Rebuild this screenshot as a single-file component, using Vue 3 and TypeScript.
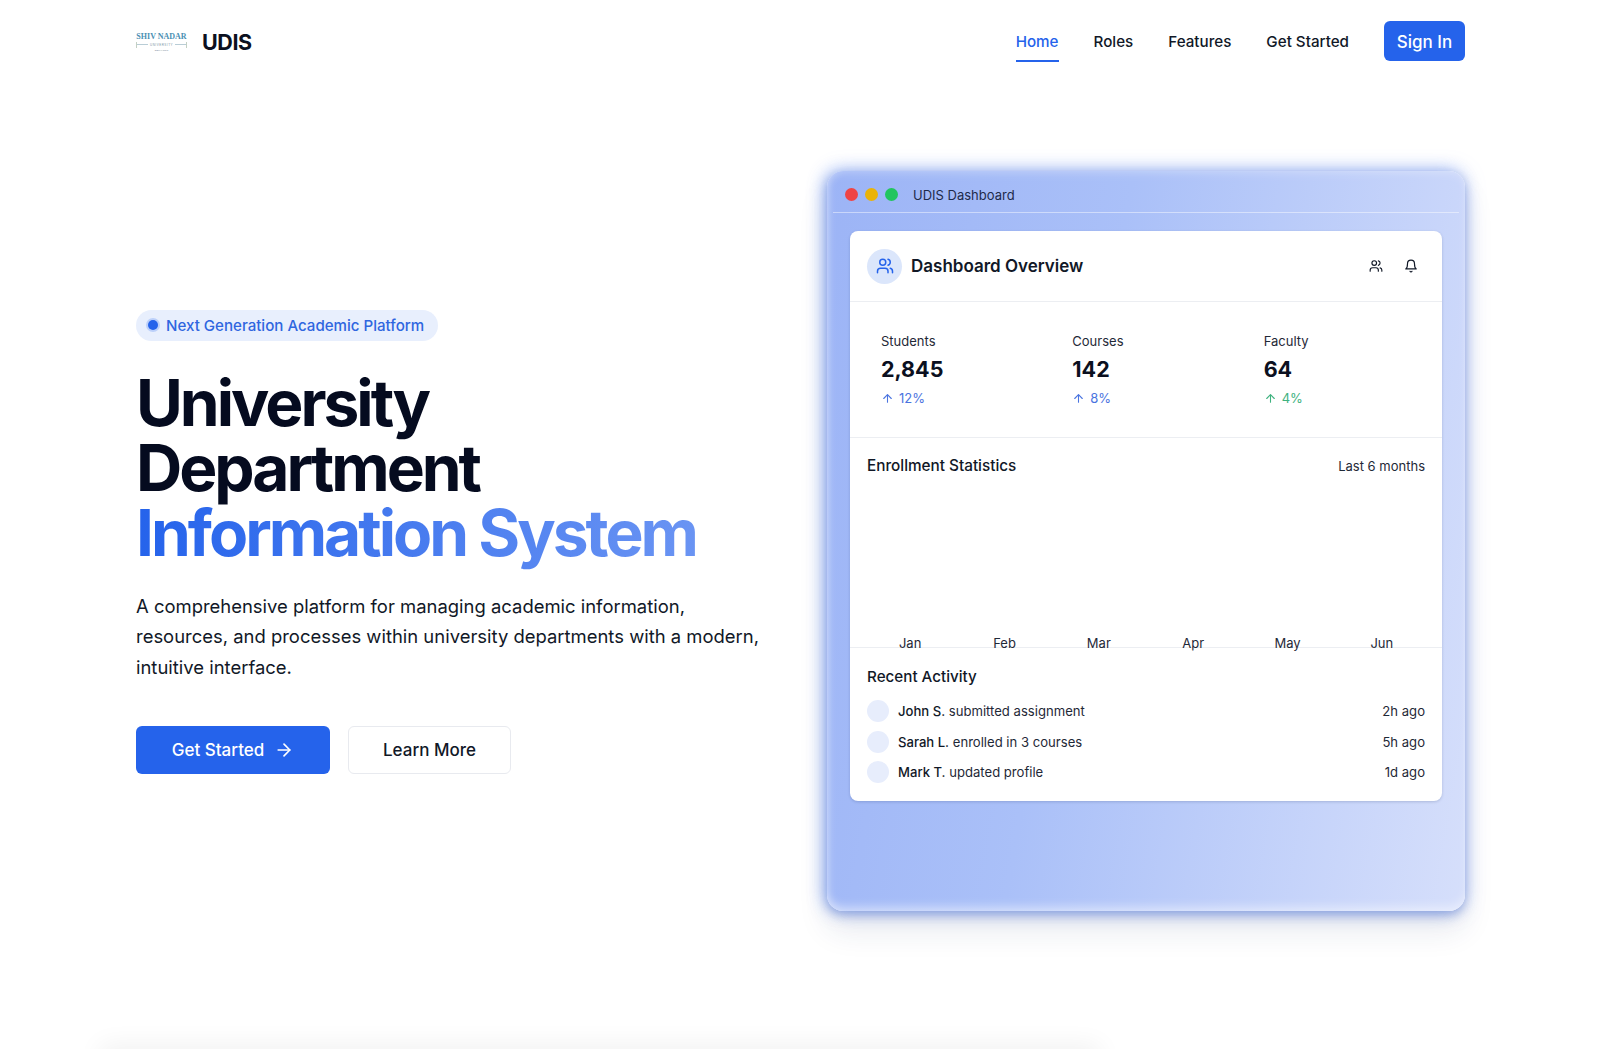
<script setup lang="ts">
const links = ['Home', 'Roles', 'Features', 'Get Started']
const stats = [
  { label: 'Students', value: '2,845', change: '12%', tone: 'blue' },
  { label: 'Courses', value: '142', change: '8%', tone: 'blue' },
  { label: 'Faculty', value: '64', change: '4%', tone: 'green' },
]
const months = ['Jan', 'Feb', 'Mar', 'Apr', 'May', 'Jun']
const activity = [
  { who: 'John S.', what: 'submitted assignment', when: '2h ago' },
  { who: 'Sarah L.', what: 'enrolled in 3 courses', when: '5h ago' },
  { who: 'Mark T.', what: 'updated profile', when: '1d ago' },
]
</script>

<template>
  <div class="page">
    <header class="nav">
      <div class="brand">
        <div class="logo">
          <span class="logo-name">SHIV NADAR</span>
          <span class="logo-uni">UNIVERSITY</span>
          <span class="logo-sub">DELHI NCR</span>
        </div>
        <span class="brand-text">UDIS</span>
      </div>
      <nav class="links">
        <a v-for="(l, i) in links" :key="l" class="link" :class="{ active: i === 0 }">{{ l }}</a>
        <button class="signin">Sign In</button>
      </nav>
    </header>

    <main class="hero">
      <section class="copy">
        <div class="badge"><span class="dot"></span>Next Generation Academic Platform</div>
        <h1>University<br />Department<br /><span class="grad">Information System</span></h1>
        <p>A comprehensive platform for managing academic information, resources, and processes within university departments with a modern, intuitive interface.</p>
        <div class="cta">
          <button class="primary">
            Get Started
            <svg width="20" height="20" viewBox="0 0 24 24" fill="none" stroke="currentColor" stroke-width="2" stroke-linecap="round" stroke-linejoin="round"><path d="M5 12h14" /><path d="m12 5 7 7-7 7" /></svg>
          </button>
          <button class="secondary">Learn More</button>
        </div>
      </section>

      <section class="window">
        <div class="titlebar">
          <span class="light red"></span><span class="light amber"></span><span class="light green"></span>
          <span class="wintitle">UDIS Dashboard</span>
        </div>
        <div class="panel">
          <div class="panel-head">
            <div class="avatar">
              <svg width="18" height="18" viewBox="0 0 24 24" fill="none" stroke="#2563eb" stroke-width="2" stroke-linecap="round" stroke-linejoin="round"><path d="M16 21v-2a4 4 0 0 0-4-4H6a4 4 0 0 0-4 4v2" /><circle cx="9" cy="7" r="4" /><path d="M22 21v-2a4 4 0 0 0-3-3.87" /><path d="M16 3.13a4 4 0 0 1 0 7.75" /></svg>
            </div>
            <span class="panel-title">Dashboard Overview</span>
            <div class="panel-icons">
              <svg width="14" height="14" viewBox="0 0 24 24" fill="none" stroke="#111827" stroke-width="2" stroke-linecap="round" stroke-linejoin="round"><path d="M16 21v-2a4 4 0 0 0-4-4H6a4 4 0 0 0-4 4v2" /><circle cx="9" cy="7" r="4" /><path d="M22 21v-2a4 4 0 0 0-3-3.87" /><path d="M16 3.13a4 4 0 0 1 0 7.75" /></svg>
              <svg width="14" height="14" viewBox="0 0 24 24" fill="none" stroke="#111827" stroke-width="2" stroke-linecap="round" stroke-linejoin="round"><path d="M6 8a6 6 0 0 1 12 0c0 7 3 9 3 9H3s3-2 3-9" /><path d="M10.3 21a1.94 1.94 0 0 0 3.4 0" /></svg>
            </div>
          </div>

          <div class="stats">
            <div v-for="s in stats" :key="s.label" class="stat">
              <div class="stat-label">{{ s.label }}</div>
              <div class="stat-value">{{ s.value }}</div>
              <div class="stat-change" :class="s.tone">
                <svg width="13" height="13" viewBox="0 0 24 24" fill="none" stroke="currentColor" stroke-width="2" stroke-linecap="round" stroke-linejoin="round"><path d="m5 12 7-7 7 7" /><path d="M12 19V5" /></svg>
                {{ s.change }}
              </div>
            </div>
          </div>

          <div class="chart">
            <div class="chart-head">
              <span class="section-title">Enrollment Statistics</span>
              <span class="muted">Last 6 months</span>
            </div>
            <div class="months">
              <span v-for="m in months" :key="m">{{ m }}</span>
            </div>
          </div>

          <div class="recent">
            <div class="section-title small">Recent Activity</div>
            <div v-for="a in activity" :key="a.who" class="row">
              <span class="row-dot"></span>
              <span class="row-text"><b>{{ a.who }}</b> {{ a.what }}</span>
              <span class="row-time">{{ a.when }}</span>
            </div>
          </div>
        </div>
      </section>
    </main>
    <div class="fade"></div>
  </div>
</template>

<style>
html, body { margin: 0; background: #fff; }
</style>

<style scoped>
.page {
  position: relative;
  height: 1049px;
  overflow: hidden;
  background: #fff;
  color: #0f172a;
  font-family: Inter, "Liberation Sans", sans-serif;
}
.nav {
  height: 82px;
  padding: 0 135px 0 136px;
  display: flex;
  align-items: center;
  justify-content: space-between;
}
.brand { display: flex; align-items: center; gap: 15px; }
.logo {
  width: 51px;
  padding-top: 2px;
  display: flex;
  flex-direction: column;
  align-items: center;
  color: #4a8fb3;
}
.logo-name { font: 700 8px/10px "Liberation Serif", serif; white-space: nowrap; }
.logo-uni {
  width: 100%;
  display: flex;
  align-items: center;
  gap: 2px;
  font: 3px/6px "Liberation Sans", sans-serif;
  letter-spacing: 0.5px;
  border-left: 1px solid #c3d0c4;
  border-right: 1px solid #c3d0c4;
  color: #7b95a5;
  box-sizing: border-box;
}
.logo-uni::before, .logo-uni::after {
  content: "";
  flex: 1;
  height: 1px;
  background: #b9cdd6;
}
.logo-sub { font: 2.5px/5px "Liberation Sans", sans-serif; color: #7b8a99; }
.brand-text { font-size: 21.5px; line-height: 28px; padding-top: 1px; font-weight: 700; letter-spacing: -0.4px; color: #0b1020; }
.links { display: flex; align-items: center; gap: 35px; }
.link {
  position: relative;
  font-size: 15.2px;
  font-weight: 500;
  line-height: 41px;
  color: #111827;
}
.link.active { color: #2563eb; }
.link.active::after {
  content: "";
  position: absolute;
  left: 0;
  right: 0;
  bottom: 0;
  height: 2px;
  background: #2563eb;
}
.signin {
  width: 81px;
  height: 40px;
  padding: 1px 0 0;
  border: 0;
  border-radius: 6px;
  background: #2563eb;
  color: #fff;
  font: 500 17px Inter, sans-serif;
}
.hero {
  height: 918px;
  padding: 0 136px;
  box-sizing: border-box;
  display: grid;
  grid-template-columns: 640px 640px;
  gap: 48px;
  align-items: center;
}
.copy { padding-top: 2px; }
.badge {
  display: inline-flex;
  align-items: center;
  gap: 8px;
  height: 31px;
  padding: 0 14px 0 12px;
  border-radius: 16px;
  background: #e8effd;
  color: #2f66e0;
  font-size: 15.1px;
  font-weight: 500;
}
.dot {
  width: 10px;
  height: 10px;
  border-radius: 50%;
  background: #2563eb;
  box-shadow: 0 0 0 2px #bcd0fa;
}
h1 {
  margin: 29px 0 0;
  font-size: 64px;
  line-height: 65.3px;
  font-weight: 700;
  letter-spacing: -3px;
  color: #050b1f;
}
.grad {
  background: linear-gradient(90deg, #2563eb, #6a94f3);
  -webkit-background-clip: text;
  background-clip: text;
  color: transparent;
}
p {
  margin: 25px 0 0;
  font-size: 18.45px;
  line-height: 30.6px;
  color: #111827;
}
.cta { display: flex; gap: 18px; margin-top: 44px; }
.primary, .secondary {
  height: 48px;
  border-radius: 6px;
  font: 500 17px Inter, sans-serif;
  display: inline-flex;
  align-items: center;
  justify-content: center;
}
.primary {
  width: 194px;
  gap: 10px;
  border: 0;
  background: #2563eb;
  color: #fff;
}
.secondary {
  width: 163px;
  border: 1px solid #e8eaef;
  background: #fff;
  color: #111827;
}
.window {
  position: relative;
  height: 740px;
  margin-left: 3px;
  margin-right: -1px;
  border-radius: 16px;
  background: linear-gradient(100deg, #9cb4f6 0%, #aac0f8 40%, #d6dffb 100%);
  box-shadow:
    inset 0 -7px 10px -2px rgba(255, 255, 255, 0.42),
    inset 0 6px 10px -3px rgba(255, 255, 255, 0.2),
    inset 4px 0 8px -2px rgba(255, 255, 255, 0.25),
    -3px 0 16px rgba(37, 99, 235, 0.35),
    0 0 20px rgba(120, 150, 240, 0.4),
    0 4px 8px rgba(30, 60, 150, 0.22),
    0 20px 30px rgba(30, 50, 100, 0.1);
}
.titlebar {
  height: 42px;
  box-sizing: border-box;
  margin: 0 6px;
  padding: 5px 12px 0;
  display: flex;
  align-items: center;
  gap: 7px;
  border-bottom: 1px solid rgba(255, 255, 255, 0.45);
}
.light { width: 13px; height: 13px; border-radius: 50%; }
.red { background: #ef4444; }
.amber { background: #eab308; }
.titlebar .green { background: #22c55e; }
.wintitle { margin-left: 8px; padding-top: 2px; font-size: 13px; color: #1e2a4a; }
.panel {
  margin: 18px 23px 0 23px;
  height: 570px;
  border-radius: 8px;
  background: #fff;
  display: flex;
  flex-direction: column;
  box-shadow: 0 1px 3px rgba(30, 50, 100, 0.2);
}
.panel-head {
  height: 71px;
  flex: none;
  box-sizing: border-box;
  padding: 0 17px;
  display: flex;
  align-items: center;
  gap: 9px;
  border-bottom: 1px solid #eceef2;
}
.avatar {
  width: 35px;
  height: 35px;
  border-radius: 50%;
  background: #dbe6fb;
  display: flex;
  align-items: center;
  justify-content: center;
}
.panel-title { font-size: 17px; font-weight: 600; color: #111827; }
.panel-icons { margin-left: auto; margin-right: 7px; display: flex; gap: 21px; }
.stats {
  height: 136px;
  flex: none;
  box-sizing: border-box;
  padding: 29px 17px 0;
  display: grid;
  grid-template-columns: repeat(3, 1fr);
  gap: 16px;
  border-bottom: 1px solid #eceef2;
}
.stat { padding-left: 14px; }
.stat-label { font-size: 13px; line-height: 21px; color: #1f2937; }
.stat-value { font-size: 21.5px; line-height: 34px; font-weight: 700; color: #0b1020; }
.stat-change {
  margin-top: 2px;
  display: flex;
  align-items: center;
  gap: 5px;
  font-size: 13px;
  line-height: 20px;
}
.stat-change.blue { color: #4a74e0; }
.stat-change.green { color: #3fb27f; }
.chart {
  height: 210px;
  flex: none;
  box-sizing: border-box;
  padding: 18px 17px 0;
  display: flex;
  flex-direction: column;
  justify-content: space-between;
  border-bottom: 1px solid #eceef2;
}
.chart-head { display: flex; justify-content: space-between; align-items: center; }
.section-title { font-size: 15.3px; font-weight: 500; color: #111827; }
.section-title.small { font-size: 15.2px; line-height: 20px; margin-bottom: 9px; }
.muted { font-size: 13px; color: #1f2937; }
.months {
  margin: 0 -4px -3px -4px;
  display: grid;
  grid-template-columns: repeat(6, 1fr);
  justify-items: center;
  font-size: 13px;
  line-height: 14px;
  color: #1f2937;
}
.recent { padding: 19px 17px 0; }
.row {
  height: 30.6px;
  display: flex;
  align-items: center;
  font-size: 13.1px;
  color: #1f2937;
}
.row-dot {
  width: 22px;
  height: 22px;
  border-radius: 50%;
  background: #e7edfc;
  margin-right: 9px;
}
.row-text b { font-weight: 500; color: #111827; }
.row-time { margin-left: auto; }
.fade {
  position: absolute;
  left: 100px;
  width: 1000px;
  bottom: -30px;
  height: 30px;
  box-shadow: 0 -4px 26px rgba(0, 0, 0, 0.06);
}
</style>
